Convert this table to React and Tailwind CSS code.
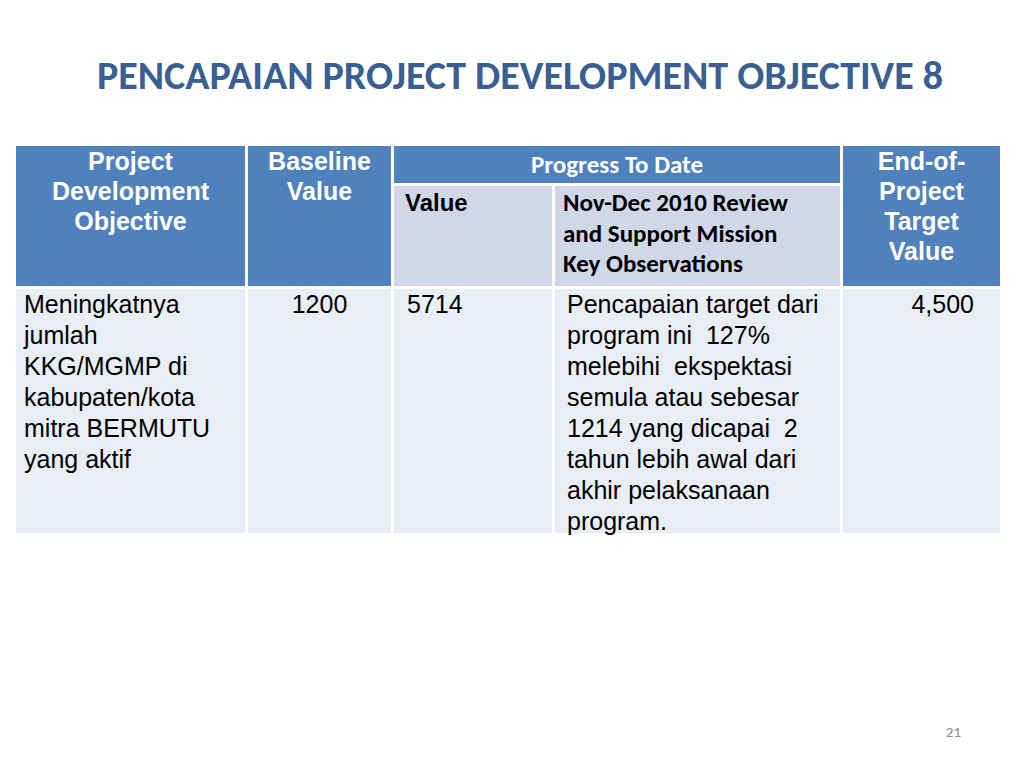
const arial = "font-['Liberation_Sans',Arial,sans-serif]";
const calibri = "font-['Carlito','Lato','Open_Sans',sans-serif]";

const observation = [
  "Pencapaian target dari",
  "program ini  127%",
  "melebihi  ekspektasi",
  "semula atau sebesar",
  "1214 yang dicapai  2",
  "tahun lebih awal dari",
  "akhir pelaksanaan",
  "program.",
];

const objective = [
  "Meningkatnya",
  "jumlah",
  "KKG/MGMP di",
  "kabupaten/kota",
  "mitra BERMUTU",
  "yang aktif",
];

function Lines({ lines }) {
  return lines.map((l) => (
    <div key={l} className="whitespace-pre">
      {l}
    </div>
  ));
}

export default function App() {
  return (
    <div className="w-[1024px] h-[768px] bg-white flex flex-col">
      <h1
        className={`${calibri} mt-[53px] pl-[16px] text-center text-[40px] leading-[46px] font-bold text-[#3a5f93]`}
      >
        PENCAPAIAN PROJECT DEVELOPMENT OBJECTIVE 8
      </h1>

      <div className="mt-[47px] ml-[16px] grid grid-cols-[229px_143px_158px_285px_157px] grid-rows-[37px_100px_244px] gap-[3px]">
        {/* header */}
        <div
          className={`${arial} row-span-2 bg-[#4f81bd] text-white font-bold text-[25px] leading-[30px] text-center`}
        >
          Project
          <br />
          Development
          <br />
          Objective
        </div>
        <div
          className={`${arial} row-span-2 bg-[#4f81bd] text-white font-bold text-[25px] leading-[30px] text-center`}
        >
          Baseline
          <br />
          Value
        </div>
        <div
          className={`${calibri} col-span-2 bg-[#4f81bd] text-white font-bold text-[25px] flex items-center justify-center`}
        >
          Progress To Date
        </div>
        <div
          className={`${arial} row-span-2 bg-[#4f81bd] text-white font-bold text-[25px] leading-[30px] text-center`}
        >
          End-of-
          <br />
          Project
          <br />
          Target
          <br />
          Value
        </div>
        <div
          className={`${arial} bg-[#d0d8e8] text-black font-bold text-[24px] leading-[28px] pl-[11px] pt-[3px]`}
        >
          Value
        </div>
        <div
          className={`${calibri} bg-[#d0d8e8] text-black font-bold text-[25px] leading-[30.5px] pl-[8px] pt-[2px]`}
        >
          Nov-Dec 2010 Review
          <br />
          and Support Mission
          <br />
          Key Observations
        </div>

        {/* body */}
        <div
          className={`${arial} bg-[#e9edf4] text-black text-[25px] leading-[31px] pl-[8px]`}
        >
          <Lines lines={objective} />
        </div>
        <div
          className={`${arial} bg-[#e9edf4] text-black text-[25px] leading-[31px] text-center`}
        >
          1200
        </div>
        <div
          className={`${arial} bg-[#e9edf4] text-black text-[25px] leading-[31px] pl-[13px]`}
        >
          5714
        </div>
        <div
          className={`${arial} bg-[#e9edf4] text-black text-[25px] leading-[31px] pl-[12px]`}
        >
          <Lines lines={observation} />
        </div>
        <div
          className={`${arial} bg-[#e9edf4] text-black text-[25px] leading-[31px] text-right pr-[26px]`}
        >
          4,500
        </div>
      </div>

      <div
        className={`${calibri} mt-auto mb-[25px] pr-[63px] text-right text-[15px] text-[#8b8b8b]`}
      >
        21
      </div>
    </div>
  );
}
